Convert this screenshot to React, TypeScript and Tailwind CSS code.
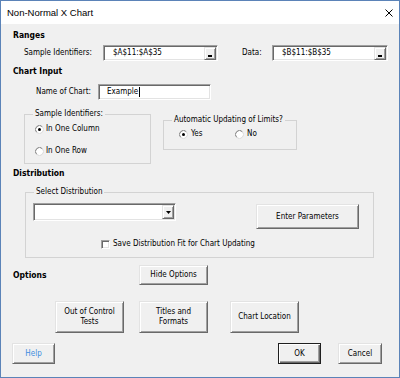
import React from "react";

const raised =
  "bg-[#f0f0f0] border border-t-[#e3e3e3] border-l-[#e3e3e3] border-r-[#696969] border-b-[#696969] shadow-[inset_1px_1px_0_#ffffff,inset_-1px_-1px_0_#a0a0a0]";
const sunken =
  "bg-white border border-t-[#a0a0a0] border-l-[#a0a0a0] border-r-white border-b-white shadow-[inset_1px_1px_0_#696969,inset_-1px_-1px_0_#e3e3e3]";

function Radio({ checked }: { checked?: boolean }) {
  return (
    <svg width="9" height="9" viewBox="0 0 9 9" className="shrink-0">
      <circle cx="4.5" cy="4.5" r="4" fill="#ffffff" />
      <path d="M1.67 7.33A4 4 0 0 1 7.33 1.67" fill="none" stroke="#7a7a7a" />
      <path d="M7.33 1.67A4 4 0 0 1 1.67 7.33" fill="none" stroke="#d8d8d8" />
      {checked ? <circle cx="4.5" cy="4.5" r="1.5" fill="#000000" /> : null}
    </svg>
  );
}

function RefField({ value, className }: { value: string; className: string }) {
  return (
    <div className={`flex h-[16px] items-center justify-between pl-[9px] pr-[1px] ${sunken} ${className}`}>
      <span>{value}</span>
      <span className={`flex h-[13px] w-[12px] items-end justify-center pb-[2px] ${raised}`}>
        <span className="h-[2px] w-[4px] bg-black" />
      </span>
    </div>
  );
}

function Button({
  children,
  className,
  isDefault,
}: {
  children: React.ReactNode;
  className: string;
  isDefault?: boolean;
}) {
  return (
    <button
      type="button"
      className={`flex shrink-0 items-center justify-center text-center leading-[10px] ${
        isDefault
          ? "border border-[#1f1f1f] bg-[#f0f0f0] shadow-[inset_1px_1px_0_#ffffff,inset_-1px_-1px_0_#696969,inset_-2px_-2px_0_#a0a0a0]"
          : raised
      } ${className}`}
    >
      {children}
    </button>
  );
}

export default function App() {
  return (
    <div className="flex h-[378px] w-[400px] flex-col border border-[#5b83b8] font-['DejaVu_Sans_Condensed','Liberation_Sans',sans-serif] text-[8px] leading-[10px] text-black">
      <div className="flex h-[23px] shrink-0 items-center justify-between bg-white pl-[6px] pr-[6px]">
        <span className="font-['Liberation_Sans',Arial,sans-serif] text-[9.5px]">Non-Normal X Chart</span>
        <svg width="8" height="8" viewBox="0 0 8 8">
          <path d="M0.5 0.5L7.5 7.5M7.5 0.5L0.5 7.5" stroke="#000000" strokeWidth="1" />
        </svg>
      </div>

      <div className="flex flex-1 flex-col bg-[#f0f0f0]">
        <div className="mt-[5px] flex h-[12px] items-center pl-[12px] text-[8.5px] font-bold">Ranges</div>

        <div className="mt-[4px] flex h-[16px] items-center pl-[23px]">
          <span className="w-[79px]">Sample Identifiers:</span>
          <RefField value="$A$11:$A$35" className="w-[115px]" />
          <span className="ml-[24px] w-[30px]">Data:</span>
          <RefField value="$B$11:$B$35" className="w-[116px]" />
        </div>

        <div className="mt-[4px] flex h-[12px] items-center pl-[12px] text-[8.5px] font-bold">Chart Input</div>

        <div className="mt-[7px] flex h-[16px] items-center pl-[35px]">
          <span className="w-[62px]">Name of Chart:</span>
          <div className={`flex h-[16px] w-[113px] items-center pl-[8px] ${sunken}`}>
            <span>Example</span>
            <span className="ml-[1px] h-[10px] w-[1px] bg-black" />
          </div>
        </div>

        <div className="mt-[9px] flex items-start">
          <fieldset className="ml-[23px] w-[127px] border border-[#d3d3d3]">
            <legend className="ml-[8px] px-[2px] leading-[10px]">Sample Identifiers:</legend>
            <div className="flex flex-col pb-[7px] pl-[10px]">
              <div className="mt-[5px] flex h-[10px] items-center gap-[2px]">
                <Radio checked />
                <span>In One Column</span>
              </div>
              <div className="mt-[12px] flex h-[10px] items-center gap-[2px]">
                <Radio />
                <span>In One Row</span>
              </div>
            </div>
          </fieldset>

          <fieldset className="ml-[12px] mt-[6px] w-[134px] border border-[#d3d3d3]">
            <legend className="ml-[8px] px-[2px] leading-[10px]">Automatic Updating of Limits?</legend>
            <div className="flex pb-[10px] pl-[15px]">
              <div className="mt-[4px] flex h-[10px] w-[56px] items-center gap-[3px]">
                <Radio checked />
                <span>Yes</span>
              </div>
              <div className="mt-[4px] flex h-[10px] items-center gap-[3px]">
                <Radio />
                <span>No</span>
              </div>
            </div>
          </fieldset>
        </div>

        <div className="mt-[3px] flex h-[12px] items-center pl-[12px] text-[8.5px] font-bold">Distribution</div>

        <fieldset className="ml-[24px] mt-[8px] w-[349px] border border-[#d3d3d3]">
          <legend className="ml-[8px] px-[2px] leading-[10px]">Select Distribution</legend>
          <div className="flex flex-col pb-[8px] pl-[7px]">
            <div className="mt-[6px] flex items-start">
              <div className={`flex h-[18px] w-[143px] items-center justify-end pr-[1px] ${sunken}`}>
                <span className={`flex h-[14px] w-[12px] items-center justify-center ${raised}`}>
                  <svg width="5" height="3" viewBox="0 0 5 3">
                    <path d="M0 0H5L2.5 3Z" fill="#000000" />
                  </svg>
                </span>
              </div>
              <Button className="ml-[80px] mt-[1px] h-[25px] w-[103px]">Enter Parameters</Button>
            </div>
            <div className="mt-[10px] flex h-[10px] items-center">
              <span className={`ml-[68px] h-[9px] w-[9px] ${sunken}`} />
              <span className="ml-[3px]">Save Distribution Fit for Chart Updating</span>
            </div>
          </div>
        </fieldset>

        <div className="mt-[7px] flex h-[20px] items-center pl-[12px]">
          <span className="w-[126px] text-[8.5px] font-bold">Options</span>
          <Button className="h-[20px] w-[69px]">Hide Options</Button>
        </div>

        <div className="mt-[16px] flex h-[32px] items-center pl-[54px]">
          <Button className="h-[32px] w-[69px]">
            Out of Control
            <br />
            Tests
          </Button>
          <Button className="ml-[15px] h-[32px] w-[69px]">
            Titles and
            <br />
            Formats
          </Button>
          <Button className="ml-[22px] h-[32px] w-[69px]">Chart Location</Button>
        </div>

        <div className="mt-[10px] flex h-[21px] items-center pl-[11px]">
          <Button className="h-[21px] w-[43px] text-[#3c8cdf]">Help</Button>
          <Button isDefault className="ml-[223px] h-[21px] w-[43px]">
            OK
          </Button>
          <Button className="ml-[17px] h-[21px] w-[44px]">Cancel</Button>
        </div>
      </div>
    </div>
  );
}
